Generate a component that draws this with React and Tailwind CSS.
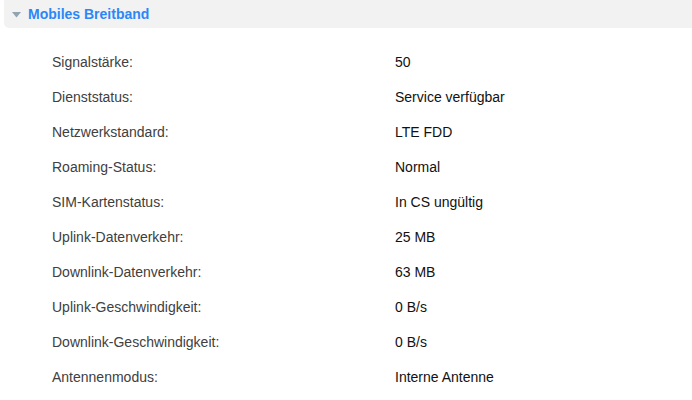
export default function App() {
  const rows = [
    ["Signalstärke:", "50"],
    ["Dienststatus:", "Service verfügbar"],
    ["Netzwerkstandard:", "LTE FDD"],
    ["Roaming-Status:", "Normal"],
    ["SIM-Kartenstatus:", "In CS ungültig"],
    ["Uplink-Datenverkehr:", "25 MB"],
    ["Downlink-Datenverkehr:", "63 MB"],
    ["Uplink-Geschwindigkeit:", "0 B/s"],
    ["Downlink-Geschwindigkeit:", "0 B/s"],
    ["Antennenmodus:", "Interne Antenne"],
  ];
  return (
    <div className="w-[692px] h-[400px] bg-white overflow-hidden" style={{ fontFamily: '"Liberation Sans", Arial, sans-serif' }}>
      <div className="ml-[4px] h-[28px] bg-[#f2f2f2] rounded-bl-[5px] flex items-center">
        <svg width="9" height="6" viewBox="0 0 9 6" className="ml-[8px] mt-[2px]">
          <polygon points="0,0 9,0 4.5,5.5" fill="#94a3b0" />
        </svg>
        <span className="ml-[7px] text-[14px] font-bold text-[#2d86f7]">Mobiles Breitband</span>
      </div>
      <div className="mt-[16.5px] flex flex-col">
        {rows.map(([l, v]) => (
          <div key={l} className="h-[35px] flex items-center text-[14px]">
            <div className="w-[395px] pl-[52px] text-[#404040]">{l}</div>
            <div className="text-[#111]">{v}</div>
          </div>
        ))}
      </div>
    </div>
  );
}
